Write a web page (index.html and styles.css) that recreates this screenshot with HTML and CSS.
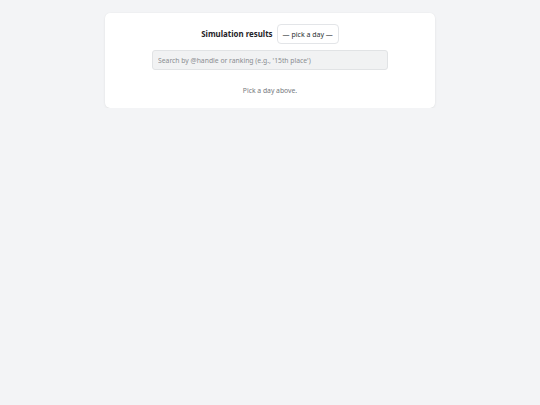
FILE: index.html
```html
<!DOCTYPE html>
<html>
<head>
<meta charset="utf-8">
<link rel="stylesheet" href="styles.css">
</head>
<body>
<div class="card">
  <div class="header">
    <span class="title">Simulation results</span>
    <button class="day-select">— pick a day —</button>
  </div>
  <input class="search" type="text" placeholder="Search by @handle or ranking (e.g., '15th place')">
  <p class="empty">Pick a day above.</p>
</div>
</body>
</html>
```
FILE: styles.css
```css
html, body {
  margin: 0;
  padding: 0;
  background: #f3f4f6;
  font-family: "Noto Sans", "Open Sans", sans-serif;
}
body {
  padding-top: 13px;
}
.card {
  width: 330px;
  margin: 0 auto;
  box-sizing: border-box;
  background: #ffffff;
  border-radius: 5px;
  box-shadow: 0 1px 3px rgba(0,0,0,0.06), 0 0 1px rgba(0,0,0,0.08);
  padding: 11px 47px 12px;
  display: flex;
  flex-direction: column;
  align-items: center;
}
.header {
  display: flex;
  align-items: center;
  gap: 4px;
  height: 20px;
}
.title {
  font-weight: 700;
  font-size: 7.9px;
  color: #1f2328;
}
.day-select {
  height: 20px;
  padding: 0 5px;
  background: #fff;
  border: 1px solid #e3e5e8;
  border-radius: 4px;
  font-family: inherit;
  font-size: 7px;
  color: #2b2f33;
}
.search {
  margin-top: 6px;
  width: 236px;
  height: 20px;
  box-sizing: border-box;
  background: #f1f2f3;
  border: 1px solid #e1e3e5;
  border-radius: 3px;
  padding: 0 5px;
  font-family: inherit;
  font-size: 6.8px;
  color: #333;
  outline: none;
}
.search::placeholder {
  color: #8a8d91;
}
.empty {
  margin: 16px 0 0;
  font-size: 6.8px;
  line-height: 10px;
  color: #75797e;
}
```
